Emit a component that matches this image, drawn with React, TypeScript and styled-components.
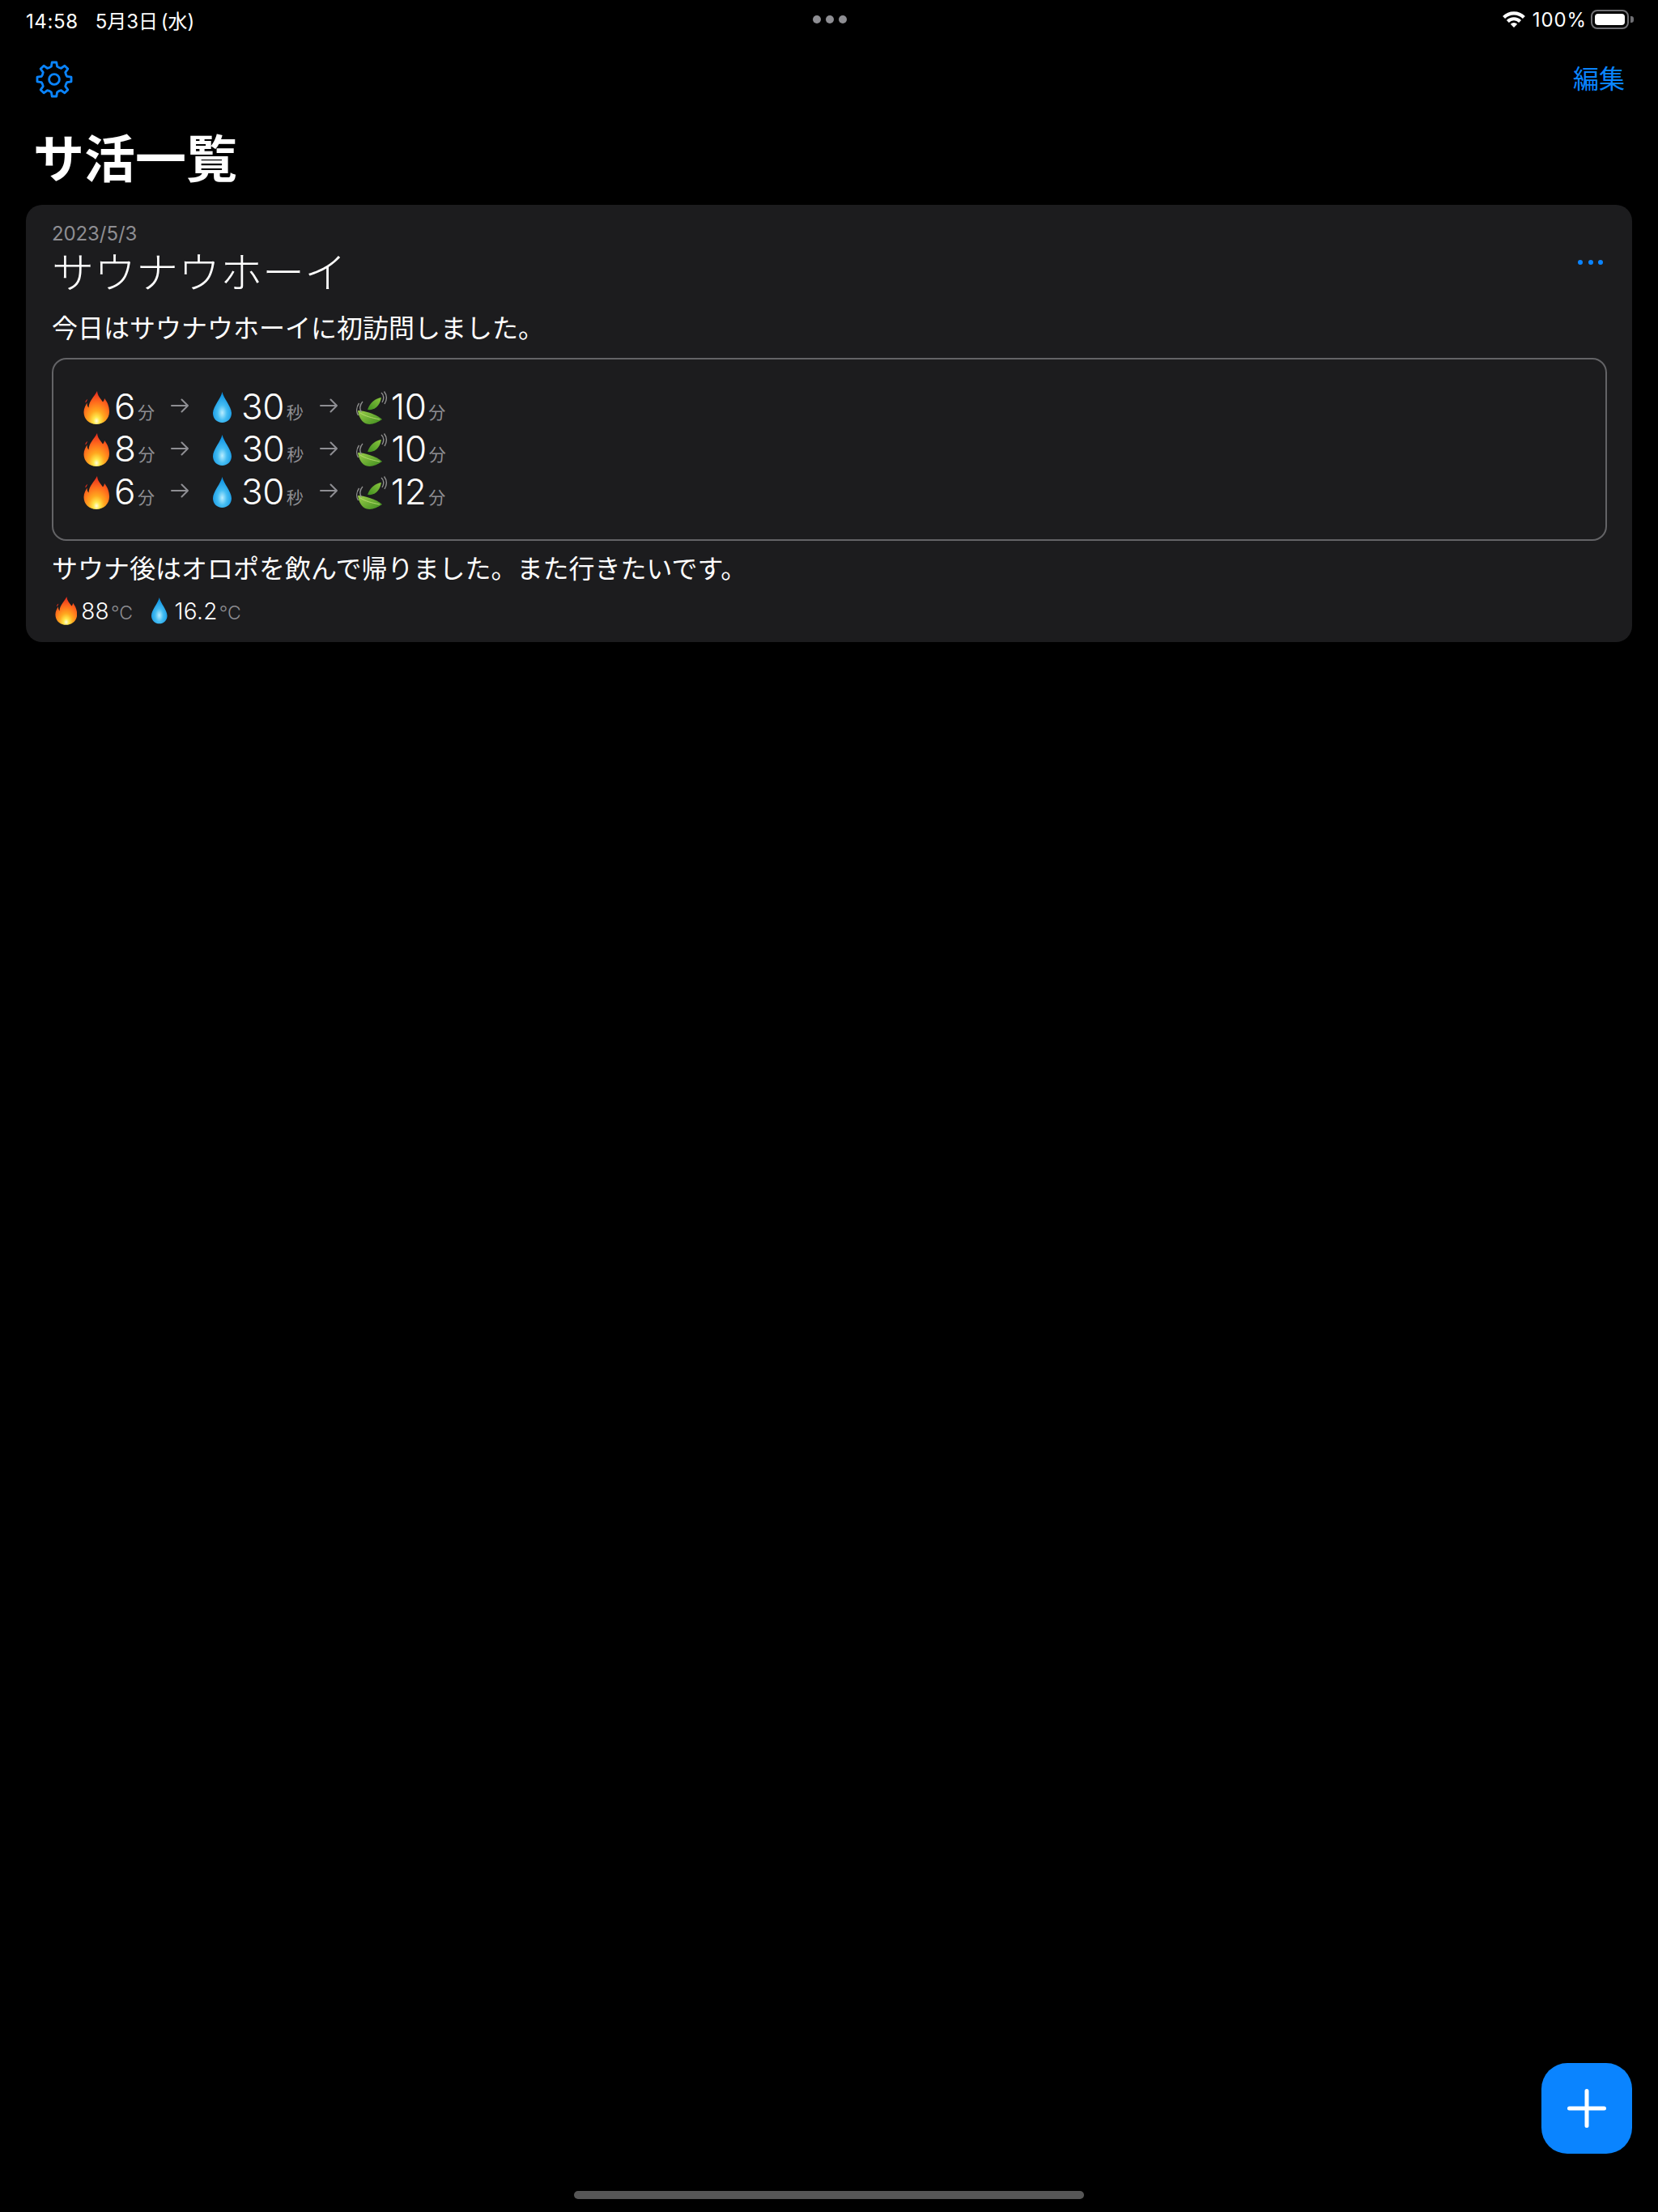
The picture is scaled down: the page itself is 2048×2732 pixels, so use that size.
import * as React from "react";
import styled, { createGlobalStyle } from "styled-components";

const FONT = `Inter, "Noto Sans CJK JP", sans-serif`;
const BLUE = "#0a84ff";
const GRAY = "#8e8e93";

const GlobalStyle = createGlobalStyle`
  html, body {
    margin: 0;
    background: #000;
  }
`;

const Page = styled.div`
  position: relative;
  width: 2048px;
  height: 2732px;
  overflow: hidden;
  background: #000;
  color: #fff;
  font-family: ${FONT};
`;

const StatusBar = styled.div`
  display: grid;
  grid-template-columns: 1fr auto 1fr;
  align-items: center;
  height: 48px;
  padding: 0 30px 0 32px;
  font-size: 24px;
  letter-spacing: 0.6px;
`;

const StatusLeft = styled.div`
  display: flex;
  align-items: baseline;
  gap: 21px;
`;

const StatusDate = styled.span`
  letter-spacing: 0;
  word-spacing: -3px;
`;

const StatusRight = styled.div`
  display: flex;
  align-items: center;
  justify-content: flex-end;
`;

const Dots = styled.div<{ $size: number; $gap: number; $color: string }>`
  display: flex;
  gap: ${(p) => p.$gap}px;

  span {
    width: ${(p) => p.$size}px;
    height: ${(p) => p.$size}px;
    border-radius: 50%;
    background: ${(p) => p.$color};
  }
`;

const Percent = styled.span`
  margin: 0 5px 0 9px;
  letter-spacing: 0.9px;
`;

const Battery = styled.div`
  display: flex;
  align-items: center;
  gap: 2px;
`;

const BatteryBody = styled.div`
  box-sizing: border-box;
  width: 47px;
  height: 24px;
  padding: 3px;
  border: 2px solid #6f6f73;
  border-radius: 8px;
`;

const BatteryFill = styled.div`
  height: 100%;
  border-radius: 4px;
  background: #fff;
`;

const BatteryNub = styled.div`
  width: 4px;
  height: 8px;
  border-radius: 0 3px 3px 0;
  background: #6f6f73;
`;

const NavBar = styled.div`
  display: flex;
  align-items: center;
  justify-content: space-between;
  padding: 27px 41px 0 44px;
`;

const EditButton = styled.span`
  color: ${BLUE};
  font-size: 32px;
  line-height: 46px;
`;

const Title = styled.h1`
  margin: 38px 0 20px 41px;
  font-size: 63px;
  line-height: 74px;
  font-weight: 700;
`;

const Card = styled.div`
  margin: 0 32px;
  padding: 21px 31px 20px 32px;
  border-radius: 20px;
  background: #1c1c1e;
`;

const CardHeader = styled.div`
  display: flex;
  align-items: center;
  justify-content: space-between;
  padding-right: 5px;
`;

const MoreButton = styled.div`
  margin-top: 4px;
`;

const DateLabel = styled.div`
  color: ${GRAY};
  font-size: 24px;
  letter-spacing: -0.1px;
  line-height: 30px;
`;

const Name = styled.div`
  margin-top: 3px;
  font-size: 52px;
  font-weight: 300;
  line-height: 62px;
`;

const Body = styled.p<{ $top: number }>`
  margin: ${(p) => p.$top}px 0 0;
  font-size: 32px;
  line-height: 44px;
`;

const SetBox = styled.div`
  margin: 14px 0 13px;
  padding: 33px 37px 31px;
  border: 2px solid #636366;
  border-radius: 18px;
`;

const SetRow = styled.div`
  display: flex;
  align-items: center;
  height: 52.5px;
`;

const Big = styled.span<{ $gap: number }>`
  margin: 0 0 3px ${(p) => p.$gap}px;
  font-size: 44px;
  font-weight: 300;
  letter-spacing: -0.5px;
  line-height: 52px;
`;

const Unit = styled.span`
  align-self: flex-end;
  margin: 0 0 7px 3px;
  color: ${GRAY};
  font-size: 21px;
  line-height: 26px;
`;

const ArrowIcon = styled.svg<{ $after: number }>`
  flex: none;
  margin: 0 ${(p) => p.$after}px 4px 20px;
`;

const EmojiSvg = styled.svg`
  flex: none;
`;

const TempRow = styled.div`
  display: flex;
  align-items: center;
  height: 36px;
  margin-top: 12px;
  padding-left: 4px;
`;

const TempValue = styled.span<{ $gap: number }>`
  margin-left: ${(p) => p.$gap}px;
  font-size: 28px;
  font-weight: 300;
  letter-spacing: 0.3px;
`;

const TempUnit = styled.span<{ $gap?: number }>`
  margin: 4px ${(p) => p.$gap ?? 0}px 0 2px;
  color: ${GRAY};
  font-size: 23px;
  font-weight: 300;
`;

const Fab = styled.div`
  position: absolute;
  right: 32px;
  bottom: 72px;
  display: flex;
  align-items: center;
  justify-content: center;
  width: 112px;
  height: 112px;
  border-radius: 32px;
  background: ${BLUE};
`;

const HomeIndicator = styled.div`
  position: absolute;
  left: 709px;
  bottom: 16px;
  width: 630px;
  height: 10px;
  border-radius: 5px;
  background: #565656;
`;

// 8 tooth gear outline, rounded by the stroke joins
const gearPath = (() => {
  const c = 23;
  const pt = (r: number, deg: number) => {
    const a = ((deg - 90) * Math.PI) / 180;
    return `${(c + r * Math.cos(a)).toFixed(2)} ${(c + r * Math.sin(a)).toFixed(2)}`;
  };
  let d = "";
  for (let i = 0; i < 8; i++) {
    const a = i * 45;
    d += `${i === 0 ? "M" : "L"}${pt(16.2, a - 13)} L${pt(21.2, a - 7.5)} L${pt(21.2, a + 7.5)} L${pt(16.2, a + 13)} `;
    d += `Q${pt(15.4, a + 22.5)} ${pt(16.2, a + 32)} `;
  }
  return d + "Z";
})();

function Gear() {
  return (
    <svg width="46" height="46" viewBox="0 0 46 46" fill="none" stroke={BLUE} strokeWidth="2.8" strokeLinejoin="round">
      <path d={gearPath} />
      <circle cx="23" cy="23" r="6.4" />
    </svg>
  );
}

function Wifi() {
  return (
    <svg width="28" height="20" viewBox="0 0 28 20" fill="none" stroke="#fff" strokeWidth="4.2">
      <path d="M1.6 7.6A17.5 17.5 0 0 1 26.4 7.6" />
      <path d="M6.4 12.4A10.8 10.8 0 0 1 21.6 12.4" />
      <path d="M14 20L9.8 15.8A6 6 0 0 1 18.2 15.8Z" fill="#fff" stroke="none" />
    </svg>
  );
}

function Arrow({ after }: { after: number }) {
  return (
    <ArrowIcon $after={after} width="22" height="18" viewBox="0 0 22 18" fill="none" stroke={GRAY} strokeWidth="2" strokeLinecap="round" strokeLinejoin="round">
      <path d="M1 9H21M13.5 1.5L21 9L13.5 16.5" />
    </ArrowIcon>
  );
}

function Fire({ scale = 1 }: { scale?: number }) {
  return (
    <EmojiSvg width={32 * scale} height={41 * scale} viewBox="0 0 32 41">
      <defs>
        <radialGradient id="fireFill" cx="0.5" cy="0.9" r="0.85">
          <stop offset="0" stopColor="#fffce0" />
          <stop offset="0.14" stopColor="#ffe94d" />
          <stop offset="0.36" stopColor="#ffa81f" />
          <stop offset="0.68" stopColor="#ff6a1c" />
          <stop offset="1" stopColor="#e9301f" />
        </radialGradient>
      </defs>
      <path
        d="M17 0C17.5 6 21 9 24 13.5C25.2 12.3 25.8 11 26 9C29.5 13.5 32 18.5 32 25.5C32 34.5 25 41 16 41C7 41 .5 34.5 .5 26C.5 21 3 17.5 4.5 14.5C4.5 17 5 19 6.5 20.5C7 12 13 7.5 17 0Z"
        fill="url(#fireFill)"
      />
      <path d="M2.5 13C3 11.5 4 10.5 5 10C4.6 11.5 4 13 2.5 14.5Z" fill="#e9301f" />
    </EmojiSvg>
  );
}

function Drop({ scale = 1 }: { scale?: number }) {
  return (
    <EmojiSvg width={23 * scale} height={38 * scale} viewBox="0 0 23 38">
      <defs>
        <radialGradient id="dropFill" cx="0.5" cy="0.68" r="0.62">
          <stop offset="0" stopColor="#b9edff" />
          <stop offset="0.4" stopColor="#45bdf3" />
          <stop offset="1" stopColor="#0a8fe0" />
        </radialGradient>
      </defs>
      <path
        d="M11.5 0C13 8 23 18 23 26.5C23 33 18 38 11.5 38C5 38 0 33 0 26.5C0 18 10 8 11.5 0Z"
        fill="url(#dropFill)"
      />
    </EmojiSvg>
  );
}

function Leaves() {
  return (
    <EmojiSvg width="40" height="41" viewBox="0 0 40 41" fill="none">
      <defs>
        <linearGradient id="leafTop" x1="0" y1="1" x2="1" y2="0">
          <stop offset="0" stopColor="#3f8f1f" />
          <stop offset="1" stopColor="#8cc63f" />
        </linearGradient>
        <linearGradient id="leafBottom" x1="0" y1="0" x2="1" y2="1">
          <stop offset="0" stopColor="#9ccf4a" />
          <stop offset="1" stopColor="#3d8c1e" />
        </linearGradient>
      </defs>
      <path d="M32 8C25 9 18 14 15 23C22 24 30 20 32 8Z" fill="url(#leafTop)" />
      <path d="M3 24C10 24 25 28 33 35C27 39 20 42 14 40.5C8 39 4 32 3 24Z" fill="url(#leafBottom)" />
      <path d="M6 27C12 31 20 33 30 35" stroke="#c3e37a" strokeWidth="0.8" />
      <path d="M32 2C35.5 5 35.5 10 33 14M35.5 0.5C39 5 39 11 36 16" stroke="#8f8f8f" strokeWidth="1.4" />
      <path d="M9 13C5 17 5 23 7.5 26M4.5 15C1 20 1 26 3.5 30" stroke="#8f8f8f" strokeWidth="1.4" />
    </EmojiSvg>
  );
}

const SETS = [
  { sauna: "6", rest: "10" },
  { sauna: "8", rest: "10" },
  { sauna: "6", rest: "12" },
];

export default function App() {
  return (
    <Page>
      <GlobalStyle />
      <StatusBar>
        <StatusLeft>
          <span>14:58</span>
          <StatusDate>5月3日 (水)</StatusDate>
        </StatusLeft>
        <Dots $size={10} $gap={6} $color={GRAY}>
          <span />
          <span />
          <span />
        </Dots>
        <StatusRight>
          <Wifi />
          <Percent>100%</Percent>
          <Battery>
            <BatteryBody>
              <BatteryFill />
            </BatteryBody>
            <BatteryNub />
          </Battery>
        </StatusRight>
      </StatusBar>

      <NavBar>
        <Gear />
        <EditButton>編集</EditButton>
      </NavBar>
      <Title>サ活一覧</Title>

      <Card>
        <CardHeader>
          <div>
            <DateLabel>2023/5/3</DateLabel>
            <Name>サウナウホーイ</Name>
          </div>
          <MoreButton>
            <Dots $size={6} $gap={6.5} $color={BLUE}>
              <span />
              <span />
              <span />
            </Dots>
          </MoreButton>
        </CardHeader>
        <Body $top={15}>今日はサウナウホーイに初訪問しました。</Body>
        <SetBox>
          {SETS.map((set, i) => (
            <SetRow key={i}>
              <Fire />
              <Big $gap={6}>{set.sauna}</Big>
              <Unit>分</Unit>
              <Arrow after={30} />
              <Drop />
              <Big $gap={12}>30</Big>
              <Unit>秒</Unit>
              <Arrow after={22} />
              <Leaves />
              <Big $gap={4}>{set.rest}</Big>
              <Unit>分</Unit>
            </SetRow>
          ))}
        </SetBox>
        <Body $top={0}>サウナ後はオロポを飲んで帰りました。また行きたいです。</Body>
        <TempRow>
          <Fire scale={0.85} />
          <TempValue $gap={5}>88</TempValue>
          <TempUnit $gap={23}>°C</TempUnit>
          <Drop scale={0.85} />
          <TempValue $gap={9}>16.2</TempValue>
          <TempUnit>°C</TempUnit>
        </TempRow>
      </Card>

      <Fab>
        <svg width="48" height="48" viewBox="0 0 48 48" stroke="#fff" strokeWidth="5" strokeLinecap="round">
          <path d="M24 2.5V45.5M2.5 24H45.5" />
        </svg>
      </Fab>
      <HomeIndicator />
    </Page>
  );
}
